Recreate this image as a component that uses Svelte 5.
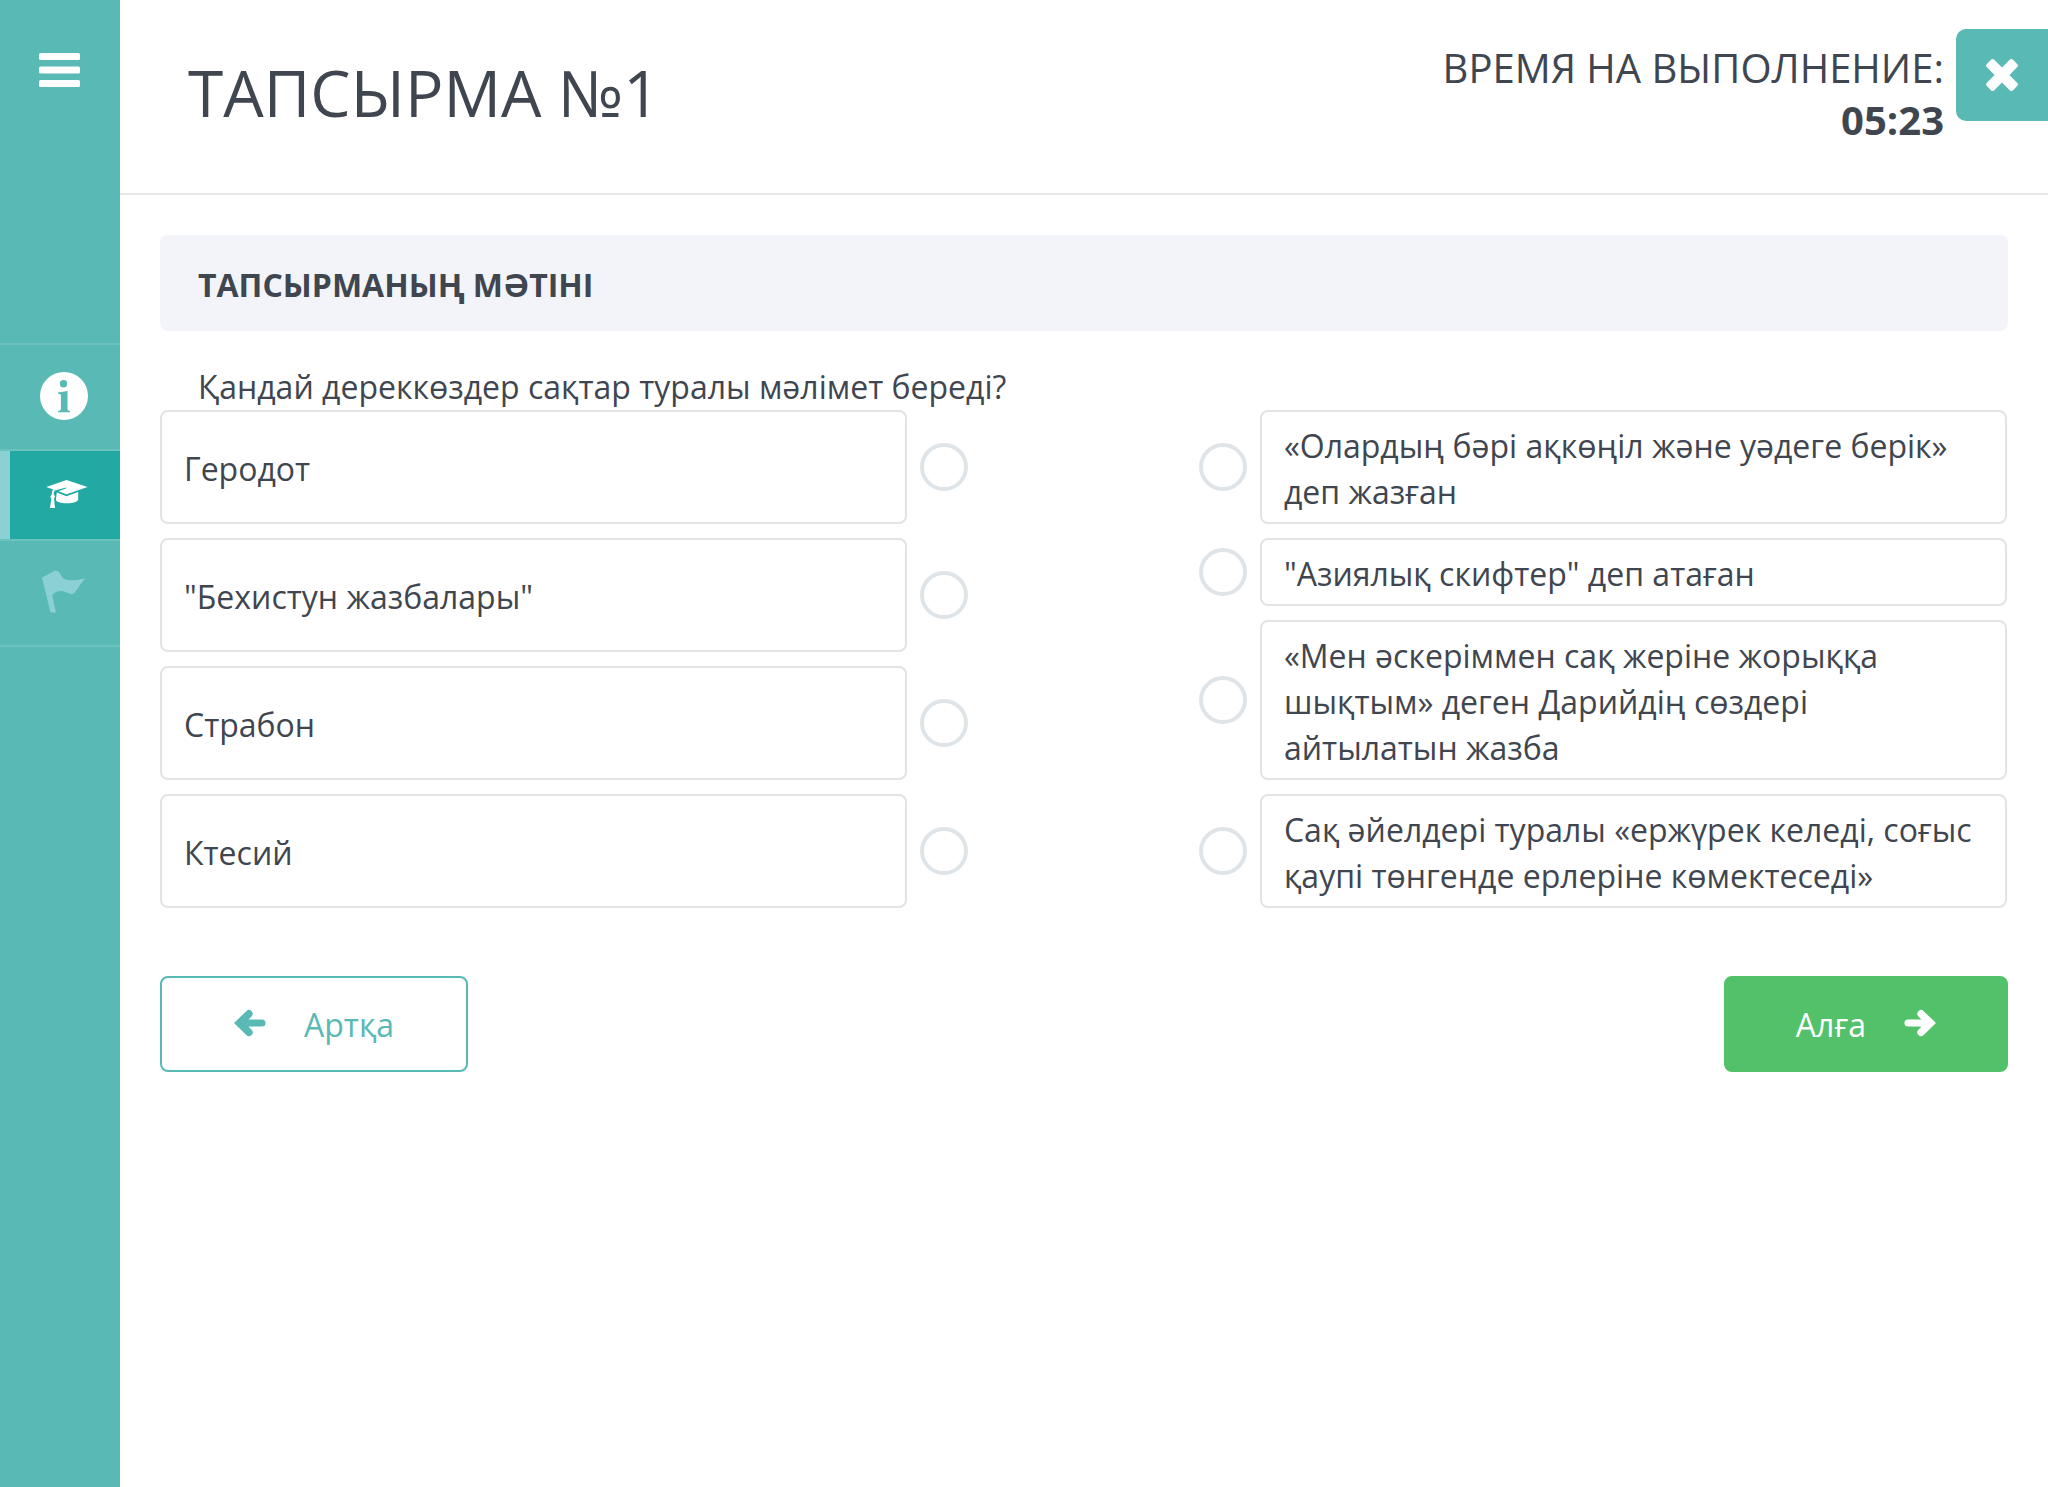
<script>
  const left = ['Геродот', '"Бехистун жазбалары"', 'Страбон', 'Ктесий'];
  const right = [
    '«Олардың бәрі ақкөңіл және уәдеге берік» деп жазған',
    '"Азиялық скифтер" деп атаған',
    '«Мен әскеріммен сақ жеріне жорыққа шықтым» деген Дарийдің сөздері айтылатын жазба',
    'Сақ әйелдері туралы «ержүрек келеді, соғыс қаупі төнгенде ерлеріне көмектеседі»'
  ];
</script>

{#snippet arrow()}
  <path d="M4 10.500h13.500l-3.100-3.100a3.700 3.700 0 0 1 5.300-5.200L32 14 19.700 26a3.700 3.700 0 0 1-5.300-5.200l3.100-3.200H4a3.500 3.500 0 0 1 0-7.100z" />
{/snippet}

<div class="app">
  <nav class="side">
    <button class="menu" aria-label="Мәзір">
      <svg width="42" height="36" viewBox="0 0 42 36">
        <rect x="0" y="1" width="41" height="7" rx="1.500" />
        <rect x="0" y="14.500" width="41" height="7" rx="1.500" />
        <rect x="0" y="28" width="41" height="7" rx="1.500" />
      </svg>
    </button>
    <ul>
      <li>
        <a href="#info" aria-label="Ақпарат">
          <svg width="48" height="48" viewBox="0 0 48 48">
            <circle cx="24" cy="24" r="24" />
            <circle class="cut" cx="23.500" cy="11.800" r="3.700" />
            <path class="cut" d="M18 20.600l9.500-1.500v17.400c0 1.700.5 2.100 2.600 2.400v1.300H18v-1.300c2.300-.3 2.900-.7 2.900-2.500V24c0-1.800-.6-2.100-2.900-2.200z" />
          </svg>
        </a>
      </li>
      <li class="active">
        <a href="#tasks" aria-label="Тапсырмалар">
          <svg width="42" height="30" viewBox="0 0 42 30">
            <path d="M20.500 1L41.500 8 20.500 15.200 12.500 12.200 20.600 9.300 20.200 8.400 8.800 11.400C8 12.400 7.700 13.800 7.700 15.300L9 17.500 8 19.800 9 29H4L5.300 19.700 4.300 17.600 5.800 15.200C5.900 13.400 6.200 11.700 6.900 10.200L.2 7.900z" />
            <path d="M10.800 13.400L20.500 17.200 32.200 13V20.500C32.200 22.800 26.500 24.300 21 24.300 15 24.300 9.900 23 9.900 20.500z" />
          </svg>
        </a>
      </li>
      <li class="muted">
        <a href="#flag" aria-label="Белгі">
          <svg width="44" height="44" viewBox="0 0 44 44">
            <path d="M0 7.500L12 1.200C14.500.2 16.800 1 18.500 4.200C20.300 8.400 23.500 9.800 28 10.200C33 10.700 38 9 43.500 8.400C38.500 12 36.500 19 32 23.200C27.500 26 25 20.700 18.500 21C14.500 21.300 11.500 23 10.200 25.500L14 42.500H8.500z" />
          </svg>
        </a>
      </li>
    </ul>
  </nav>

  <main>
    <header>
      <h1>ТАПСЫРМА №1</h1>
      <div class="timer">
        <div>ВРЕМЯ НА ВЫПОЛНЕНИЕ:</div>
        <strong>05:23</strong>
      </div>
      <button class="close" aria-label="Жабу">
        <svg width="34" height="34" viewBox="0 0 34 34">
          <rect x="-1.500" y="11.750" width="37" height="10.500" rx="2" transform="rotate(45 17 17)" />
          <rect x="-1.500" y="11.750" width="37" height="10.500" rx="2" transform="rotate(-45 17 17)" />
        </svg>
      </button>
    </header>

    <section>
      <h2>ТАПСЫРМАНЫҢ МӘТІНІ</h2>
      <p>Қандай дереккөздер сақтар туралы мәлімет береді?</p>

      <div class="match">
        <div class="col">
          {#each left as text}
            <div class="row">
              <div class="card tall">{text}</div>
              <button class="dot" aria-label={text}></button>
            </div>
          {/each}
        </div>
        <div class="col">
          {#each right as text}
            <div class="row">
              <button class="dot" aria-label={text}></button>
              <div class="card">{text}</div>
            </div>
          {/each}
        </div>
      </div>

      <footer>
        <button class="btn back">
          <svg width="32" height="32" viewBox="0 0 32 32"><g transform="matrix(-1 0 0 1 32 0)">{@render arrow()}</g></svg>
          <span>Артқа</span>
        </button>
        <button class="btn next">
          <span>Алға</span>
          <svg width="32" height="32" viewBox="0 0 32 32">{@render arrow()}</svg>
        </button>
      </footer>
    </section>
  </main>
</div>

<style>
  :global(body) {
    margin: 0;
    background: #fff;
  }
  .app {
    display: flex;
    min-height: 100vh;
    font: 32px/46px 'Open Sans', 'Noto Sans', sans-serif;
    color: #40464f;
  }
  .app * {
    box-sizing: border-box;
  }
  button {
    padding: 0;
    border: 0;
    background: none;
    font: inherit;
    cursor: pointer;
  }
  svg {
    display: block;
    flex: none;
    fill: currentColor;
  }
  .side {
    flex: none;
    width: 120px;
    background: #58b9b5;
    color: #fff;
  }
  .menu {
    display: flex;
    justify-content: center;
    width: 100%;
    height: 343px;
    padding-top: 52px;
    color: #fff;
  }
  ul {
    margin: 0;
    padding: 0;
    list-style: none;
    border-bottom: 2px solid #6cc1bd;
  }
  li {
    border-top: 2px solid #6cc1bd;
  }
  li a {
    display: flex;
    align-items: center;
    justify-content: center;
    height: 104px;
    padding: 0 0 2px 8px;
    color: #fff;
  }
  .active a {
    height: 88px;
    padding-left: 3px;
    border-left: 10px solid #8bd1d4;
    background: #23a9a3;
  }
  .muted a {
    color: #8bd1d4;
  }
  .cut {
    fill: #58b9b5;
  }
  main {
    flex: 1;
    min-width: 0;
  }
  header {
    display: flex;
    align-items: flex-start;
    height: 195px;
    border-bottom: 2px solid #e4e6e8;
  }
  h1 {
    flex: 1;
    margin: 0;
    padding: 43px 0 0 68px;
    font-size: 64px;
    line-height: 100px;
    font-weight: 400;
  }
  .timer {
    padding-top: 42px;
    font-size: 40px;
    line-height: 52px;
    text-align: right;
  }
  .timer strong {
    display: block;
    font-weight: 700;
  }
  .close {
    display: flex;
    align-items: center;
    justify-content: center;
    width: 92px;
    height: 92px;
    margin: 29px 0 0 12px;
    border-radius: 10px 0 0 10px;
    background: #58b9b5;
    color: #fff;
  }
  section {
    padding: 40px;
  }
  h2 {
    margin: 0;
    padding: 27px 38px 23px;
    border-radius: 8px;
    background: #f3f4f9;
    font-size: 32px;
    font-weight: 700;
  }
  p {
    margin: 33px 0 0;
    padding: 0 38px;
  }
  .match {
    display: flex;
    justify-content: space-between;
    margin-right: 1px;
  }
  .col {
    display: flex;
    flex-direction: column;
    gap: 14px;
    width: 43.75%;
  }
  .row {
    display: flex;
    align-items: center;
    gap: 13px;
  }
  .card {
    flex: 1;
    display: flex;
    align-items: center;
    padding: 11px 22px 7px;
    border: 2px solid #e2e3e6;
    border-radius: 8px;
  }
  .tall {
    min-height: 114px;
  }
  .dot {
    flex: none;
    width: 48px;
    height: 48px;
    border: 4px solid #dfe4e8;
    border-radius: 50%;
  }
  footer {
    display: flex;
    justify-content: space-between;
    margin-top: 68px;
  }
  .btn {
    display: flex;
    align-items: center;
    gap: 38px;
    height: 96px;
    padding: 2px 70px 0;
    border: 2px solid #58b9b5;
    border-radius: 8px;
    color: #58b9b5;
  }
  .back {
    padding: 2px 72px 0;
  }
  .next {
    border-color: #52c169;
    background: #52c169;
    color: #fff;
  }
</style>
